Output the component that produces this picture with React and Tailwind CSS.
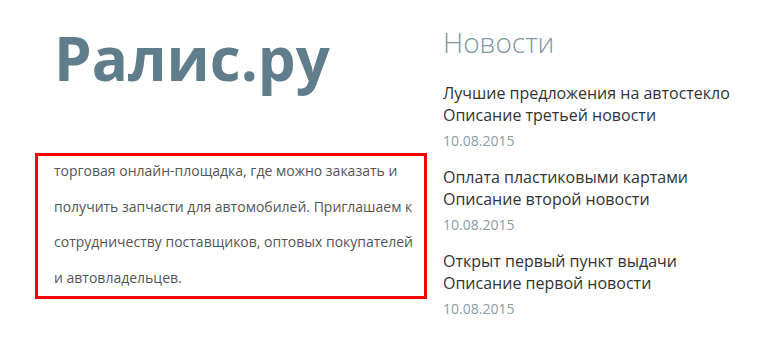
import React from 'react';

const news = [
  { title: 'Лучшие предложения на автостекло', text: 'Описание третьей новости', date: '10.08.2015' },
  { title: 'Оплата пластиковыми картами', text: 'Описание второй новости', date: '10.08.2015' },
  { title: 'Открыт первый пункт выдачи', text: 'Описание первой новости', date: '10.08.2015' },
];

const App = () => {
  return (
    <div className="w-[760px] h-[355px] bg-white flex font-['Open_Sans',sans-serif]">
      <div className="w-[392px] ml-[35px] flex flex-col">
        <h1 className="mt-[28px] ml-[19px] text-[60px] leading-none font-bold text-[#607d8b]">Ралис.ру</h1>
        <div className="mt-[65px] h-[146px] border-[3px] border-[#ff0000] pl-[16px] overflow-hidden">
          <p className="-mt-[3px] text-[14px] leading-[35.5px] text-[#555]">
            торговая онлайн-площадка, где можно заказать и получить запчасти для автомобилей. Приглашаем к сотрудничеству поставщиков, оптовых покупателей и автовладельцев.
          </p>
        </div>
      </div>
      <div className="ml-[16px] flex flex-col">
        <h2 className="mt-[22px] text-[28px] leading-[40px] font-light text-[#7f97a4]">Новости</h2>
        <ul className="mt-[20px] flex flex-col gap-[15px]">
          {news.map((item, i) => (
            <li key={i} className="flex flex-col">
              <span className="text-[16px] leading-[22px] text-[#333]">{item.title}</span>
              <span className="text-[16px] leading-[22px] text-[#333]">{item.text}</span>
              <span className="mt-[5px] text-[14px] leading-[20px] text-[#8a9ba6]">{item.date}</span>
            </li>
          ))}
        </ul>
      </div>
    </div>
  );
};

export default App;
